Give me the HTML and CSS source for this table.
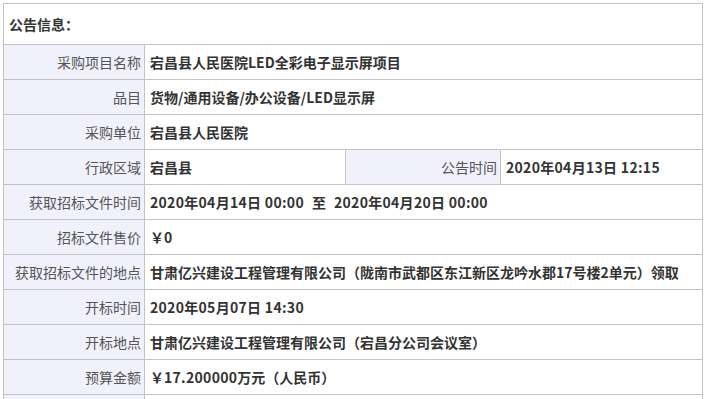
FILE: index.html
```html
<!DOCTYPE html>
<html lang="zh-CN">
<head>
<meta charset="utf-8">
<title>公告信息</title>
<link rel="stylesheet" href="styles.css">
</head>
<body>
<div class="info-table">
  <div class="cell head">公告信息：</div>

  <div class="cell label">采购项目名称</div>
  <div class="cell value span3">宕昌县人民医院LED全彩电子显示屏项目</div>

  <div class="cell label">品目</div>
  <div class="cell value span3">货物/通用设备/办公设备/LED显示屏</div>

  <div class="cell label">采购单位</div>
  <div class="cell value span3">宕昌县人民医院</div>

  <div class="cell label">行政区域</div>
  <div class="cell value">宕昌县</div>
  <div class="cell label">公告时间</div>
  <div class="cell value"><span class="num">2020年04月13日 12:15</span></div>

  <div class="cell label">获取招标文件时间</div>
  <div class="cell value span3"><span class="num">2020年04月14日 00:00</span><span class="sep">至</span><span class="num">2020年04月20日 00:00</span></div>

  <div class="cell label">招标文件售价</div>
  <div class="cell value span3">￥0</div>

  <div class="cell label">获取招标文件的地点</div>
  <div class="cell value span3">甘肃亿兴建设工程管理有限公司（陇南市武都区东江新区龙吟水郡17号楼2单元）领取</div>

  <div class="cell label">开标时间</div>
  <div class="cell value span3"><span class="num">2020年05月07日 14:30</span></div>

  <div class="cell label">开标地点</div>
  <div class="cell value span3">甘肃亿兴建设工程管理有限公司（宕昌分公司会议室）</div>

  <div class="cell label">预算金额</div>
  <div class="cell value span3">￥<span class="num">17.200000</span>万元（人民币）</div>

  <div class="cell label"></div>
  <div class="cell value span3"></div>
</div>
</body>
</html>
```

FILE: styles.css
```css
html, body {
  margin: 0;
  padding: 0;
  background: #ffffff;
}

body {
  padding: 3px 0 0 3px;
  font-family: "Noto Sans CJK SC", "Microsoft YaHei", sans-serif;
  font-size: 14px;
  color: #333333;
}

.info-table {
  width: 700px;
  box-sizing: border-box;
  display: grid;
  grid-template-columns: 140px 200px 154px 201px;
  grid-template-rows: 40px repeat(11, 34px);
  gap: 1px;
  padding: 1px;
  background: #c3c3c3;
}

.cell {
  display: flex;
  align-items: center;
  background: #ffffff;
  white-space: pre;
  overflow: hidden;
  line-height: 1;
}

.head {
  grid-column: 1 / -1;
  padding-left: 5px;
  font-weight: bold;
  color: #333333;
}

.label {
  justify-content: flex-end;
  padding-right: 3px;
  background: #f1f1fc;
  color: #555555;
}

.value {
  padding-left: 5px;
  font-weight: bold;
  color: #333333;
}

.num {
  letter-spacing: 0.3px;
}

.sep {
  padding: 0 8px;
}

.span3 {
  grid-column: 2 / -1;
}
```
